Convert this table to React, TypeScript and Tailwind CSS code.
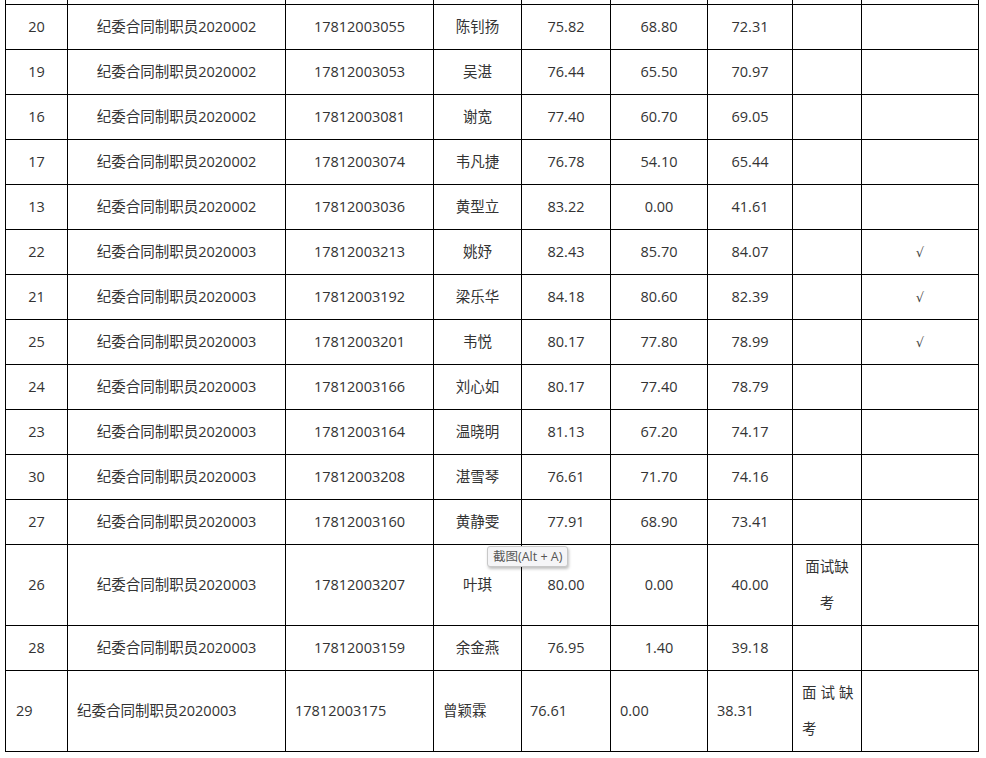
import React from 'react';

type Row = {
  no: string;
  post: string;
  ticket: string;
  name: string;
  written: string;
  interview: string;
  total: string;
  note?: boolean;
  pass?: boolean;
  tall?: boolean;
};

const rows: Row[] = [
  { no: '20', post: '纪委合同制职员2020002', ticket: '17812003055', name: '陈钊扬', written: '75.82', interview: '68.80', total: '72.31' },
  { no: '19', post: '纪委合同制职员2020002', ticket: '17812003053', name: '吴湛', written: '76.44', interview: '65.50', total: '70.97' },
  { no: '16', post: '纪委合同制职员2020002', ticket: '17812003081', name: '谢宽', written: '77.40', interview: '60.70', total: '69.05' },
  { no: '17', post: '纪委合同制职员2020002', ticket: '17812003074', name: '韦凡捷', written: '76.78', interview: '54.10', total: '65.44' },
  { no: '13', post: '纪委合同制职员2020002', ticket: '17812003036', name: '黄型立', written: '83.22', interview: '0.00', total: '41.61' },
  { no: '22', post: '纪委合同制职员2020003', ticket: '17812003213', name: '姚妤', written: '82.43', interview: '85.70', total: '84.07', pass: true },
  { no: '21', post: '纪委合同制职员2020003', ticket: '17812003192', name: '梁乐华', written: '84.18', interview: '80.60', total: '82.39', pass: true },
  { no: '25', post: '纪委合同制职员2020003', ticket: '17812003201', name: '韦悦', written: '80.17', interview: '77.80', total: '78.99', pass: true },
  { no: '24', post: '纪委合同制职员2020003', ticket: '17812003166', name: '刘心如', written: '80.17', interview: '77.40', total: '78.79' },
  { no: '23', post: '纪委合同制职员2020003', ticket: '17812003164', name: '温晓明', written: '81.13', interview: '67.20', total: '74.17' },
  { no: '30', post: '纪委合同制职员2020003', ticket: '17812003208', name: '湛雪琴', written: '76.61', interview: '71.70', total: '74.16' },
  { no: '27', post: '纪委合同制职员2020003', ticket: '17812003160', name: '黄静雯', written: '77.91', interview: '68.90', total: '73.41' },
  { no: '26', post: '纪委合同制职员2020003', ticket: '17812003207', name: '叶琪', written: '80.00', interview: '0.00', total: '40.00', note: true, tall: true },
  { no: '28', post: '纪委合同制职员2020003', ticket: '17812003159', name: '余金燕', written: '76.95', interview: '1.40', total: '39.18' },
];

const cell = 'border border-black text-center align-middle p-0';
const left = 'border border-black align-middle';

export default function App() {
  return (
    <div
      className="relative w-[986px] h-[758px] overflow-hidden bg-white text-[14.5px] text-[#333]"
      style={{ fontFamily: '"Open Sans", "Noto Sans CJK SC", sans-serif' }}
    >
      <table className="ml-[5px] border-collapse table-fixed w-[973px]">
        <colgroup>
          <col className="w-[62px]" />
          <col className="w-[218px]" />
          <col className="w-[148px]" />
          <col className="w-[88px]" />
          <col className="w-[89px]" />
          <col className="w-[97px]" />
          <col className="w-[85px]" />
          <col className="w-[69px]" />
          <col className="w-[117px]" />
        </colgroup>
        <tbody>
          <tr className="h-[4px]">
            {Array.from({ length: 9 }).map((_, i) => (
              <td key={i} className="border-x border-b border-black p-0" />
            ))}
          </tr>
          {rows.map((r) => (
            <tr key={r.no} className={r.tall ? 'h-[81px]' : 'h-[45px]'}>
              <td className={cell}>{r.no}</td>
              <td className={cell}>{r.post}</td>
              <td className={cell}>{r.ticket}</td>
              <td className={cell}>{r.name}</td>
              <td className={cell}>{r.written}</td>
              <td className={cell}>{r.interview}</td>
              <td className={cell}>{r.total}</td>
              <td className={cell}>
                {r.note && (
                  <div className="leading-[36px] pt-[1px]">
                    面试缺
                    <br />
                    考
                  </div>
                )}
              </td>
              <td className={cell}>
                {r.pass && <span className="text-[13px] text-[#444] font-['DejaVu_Sans']">√</span>}
              </td>
            </tr>
          ))}
          <tr className="h-[81px] text-left">
            <td className={`${left} pl-[10px]`}>29</td>
            <td className={`${left} pl-[9px]`}>纪委合同制职员2020003</td>
            <td className={`${left} pl-[9px]`}>17812003175</td>
            <td className={`${left} pl-[9px]`}>曾颖霖</td>
            <td className={`${left} pl-[8px]`}>76.61</td>
            <td className={`${left} pl-[9px]`}>0.00</td>
            <td className={`${left} pl-[9px]`}>38.31</td>
            <td className={`${left} pl-[9px] leading-[36px]`}>
              <span className="tracking-[4px]">面试缺</span>
              <br />考
            </td>
            <td className="border border-black" />
          </tr>
        </tbody>
      </table>

      <div className="absolute left-[487px] top-[546px] h-[21px] px-[5px] rounded-[3px] border border-[#c8c8c8] bg-[#f5f5f7] shadow-[1px_2px_3px_rgba(0,0,0,0.25)] text-[12.5px] leading-[19px] text-[#555] whitespace-nowrap">
        截图(Alt + A)
      </div>
    </div>
  );
}
